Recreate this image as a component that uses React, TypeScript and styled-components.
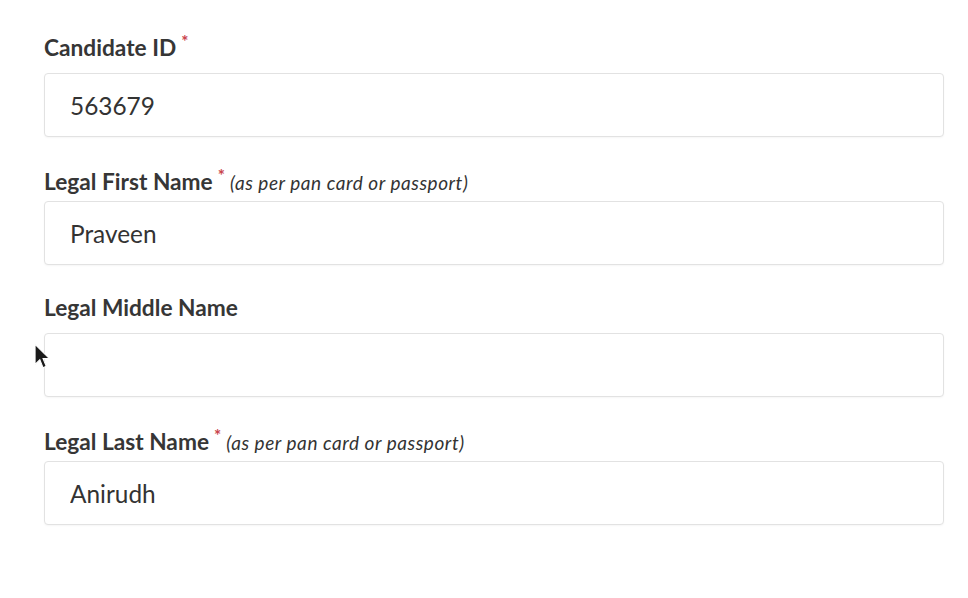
import styled, { createGlobalStyle } from "styled-components";

const GlobalStyle = createGlobalStyle`
  html, body {
    margin: 0;
    padding: 0;
    background: #ffffff;
  }
  body {
    font-family: Lato, "Open Sans", sans-serif;
    color: #333333;
  }
`;

const Page = styled.div`
  position: relative;
  width: 968px;
  height: 598px;
  padding: 35px 24px 0 44px;
  box-sizing: border-box;
`;

const Form = styled.form`
  display: flex;
  flex-direction: column;
  gap: 30px;
`;

const Field = styled.div`
  display: flex;
  flex-direction: column;
`;

const Label = styled.label<{ $tight?: boolean }>`
  display: flex;
  align-items: baseline;
  height: 26px;
  line-height: 26px;
  margin-top: ${props => (props.$tight ? "2px" : "0")};
  margin-bottom: ${props => (props.$tight ? "6px" : "12px")};
  font-size: 22.7px;
  font-weight: 700;
  color: #363636;
`;

const Star = styled.span`
  color: #c9434b;
  font-size: 17px;
  font-weight: 700;
  margin-left: 5px;
  position: relative;
  top: -8px;
`;

const Hint = styled.span`
  font-size: 19px;
  font-weight: 400;
  font-style: italic;
  letter-spacing: 0.55px;
  margin-left: 5px;
  color: #333333;
`;

const Input = styled.input`
  height: 64px;
  width: 900px;
  box-sizing: border-box;
  border: 1px solid #e2e2e2;
  border-radius: 4px;
  padding: 0 25px;
  font-family: Lato, "Open Sans", sans-serif;
  font-size: 24.4px;
  color: #333333;
  background: #fff;
  outline: none;
  box-shadow: 0 1px 2px rgba(0, 0, 0, 0.04);
`;

const Pointer = styled.svg`
  position: absolute;
  left: 34px;
  top: 343px;
`;

type FieldProps = {
  label: string;
  required?: boolean;
  hint?: string;
  value: string;
};

function FormField({ label, required, hint, value }: FieldProps) {
  return (
    <Field>
      <Label $tight={!!hint}>
        {label}
        {required && <Star>*</Star>}
        {hint && <Hint>{hint}</Hint>}
      </Label>
      <Input defaultValue={value} />
    </Field>
  );
}

export default function App() {
  return (
    <Page>
      <GlobalStyle />
      <Form>
        <FormField label="Candidate ID" required value="563679" />
        <FormField label="Legal First Name" required hint="(as per pan card or passport)" value="Praveen" />
        <FormField label="Legal Middle Name" value="" />
        <FormField label="Legal Last Name" required hint="(as per pan card or passport)" value="Anirudh" />
      </Form>
      <Pointer width="17" height="28" viewBox="0 0 16 26">
        <path d="M1 1 L1 20 L5.5 15.5 L8.5 23 L11.5 21.8 L8.5 14.5 L14.5 14.5 Z" fill="#1a1a1a" stroke="#ffffff" strokeWidth="1" />
      </Pointer>
    </Page>
  );
}
